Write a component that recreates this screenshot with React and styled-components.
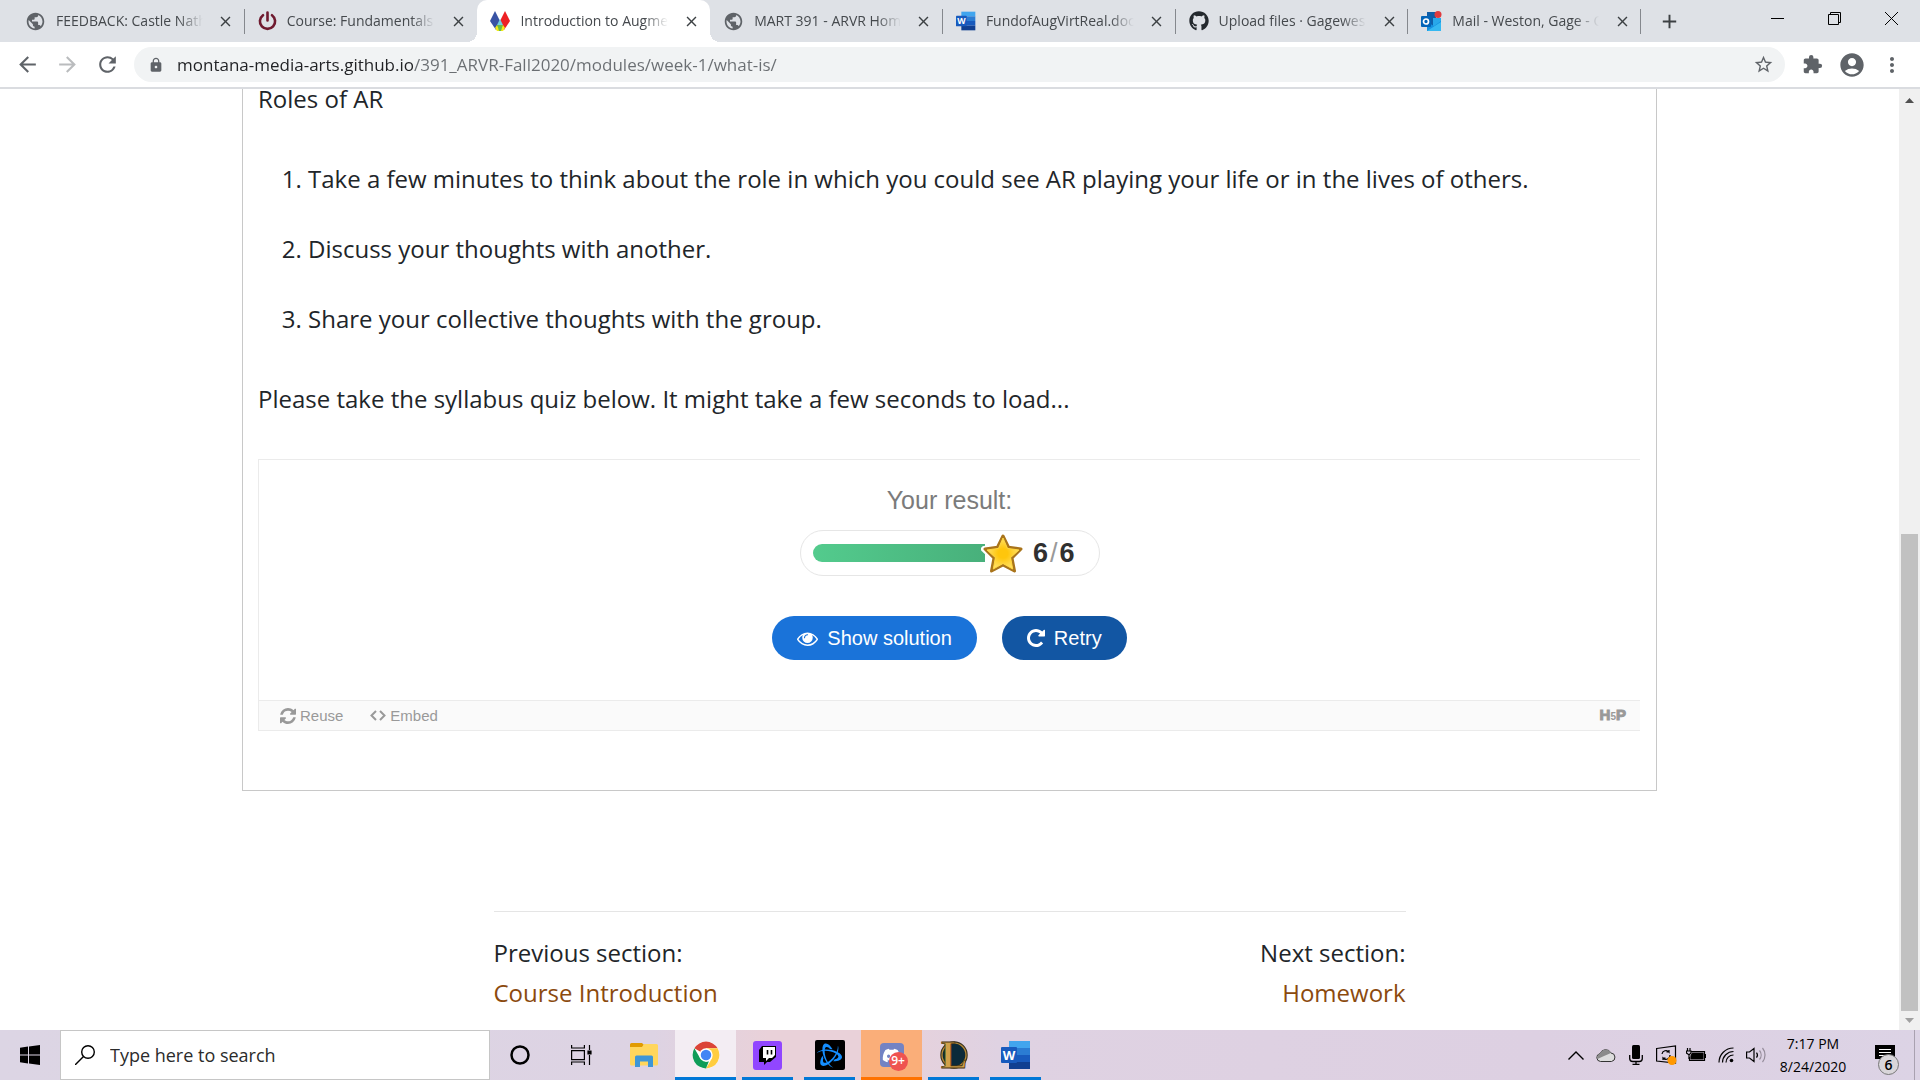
import React from "react";
import styled, { createGlobalStyle, css } from "styled-components";
import {
  MdArrowBack,
  MdArrowForward,
  MdRefresh,
  MdLock,
  MdStarBorder,
  MdExtension,
  MdAccountCircle,
  MdMoreVert,
  MdPublic,
  MdClose,
  MdAdd,
} from "react-icons/md";
import { FaGithub, FaDiscord } from "react-icons/fa";
import { SiBattledotnet } from "react-icons/si";

const uiFont = '"Segoe UI", "Open Sans", "Noto Sans", sans-serif';
const quizFont = '"Liberation Sans", Arial, sans-serif';

const GlobalStyle = createGlobalStyle`
  *, *::before, *::after { box-sizing: border-box; }
  body { margin: 0; overflow: hidden; background: #fff; font-family: ${uiFont}; color: #212529; }
  button { font: inherit; color: inherit; border: 0; background: none; padding: 0; margin: 0; display: inline-flex; align-items: center; justify-content: center; }
  svg { display: block; flex: none; }
`;

const Desktop = styled.div`
  height: 100vh;
  display: grid;
  grid-template-columns: minmax(0, 1fr);
  grid-template-rows: auto auto minmax(0, 1fr) auto;
`;

/* ---------- Tab strip ---------- */

const TabStrip = styled.header`
  height: 42px;
  padding-left: 12px;
  display: flex;
  background: #dee1e6;
`;

const TabList = styled.div`
  flex: 1;
  display: flex;
  min-width: 0;
`;

const Tab = styled.div`
  position: relative;
  flex: 1 1 0;
  min-width: 0;
  display: flex;
  align-items: center;
  padding: 0 11px 0 13px;
  color: #45494d;
  ${(p) =>
    p.$divider &&
    css`
      &::after {
        content: "";
        position: absolute;
        right: 0;
        top: 9px;
        width: 1px;
        height: 25px;
        background: #85888d;
      }
    `}
  ${(p) =>
    p.$active &&
    css`
      background: #fff;
      border-radius: 10px 10px 0 0;
      &::before,
      &::after {
        content: "";
        position: absolute;
        bottom: 0;
        width: 10px;
        height: 10px;
      }
      &::before {
        left: -10px;
        background: radial-gradient(circle at 0 0, transparent 10px, #fff 10px);
      }
      &::after {
        right: -10px;
        background: radial-gradient(circle at 100% 0, transparent 10px, #fff 10px);
      }
    `}
`;

const TabTitle = styled.button`
  flex: 1;
  min-width: 0;
  height: 34px;
  gap: 10px;
  justify-content: flex-start !important;
`;

const TabLabel = styled.span`
  flex: 1;
  min-width: 0;
  margin-right: 15px;
  overflow: hidden;
  white-space: nowrap;
  text-align: left;
  font-size: 14px;
  line-height: 20px;
  mask-image: linear-gradient(90deg, #000 calc(100% - 24px), transparent);
`;

const IconButton = styled.button`
  flex: none;
  width: ${(p) => p.$w || 20}px;
  height: ${(p) => p.$h || 20}px;
  color: ${(p) => p.$color || "#3c4043"};
`;

const StripEnd = styled.div`
  width: 279px;
  display: flex;
  align-items: flex-start;
  justify-content: space-between;
`;

const NewTab = styled.button`
  width: 56px;
  height: 34px;
  margin-top: 4px !important;
  color: #3c4043;
`;

const WindowControls = styled.div`
  display: flex;
`;

/* ---------- Toolbar ---------- */

const Toolbar = styled.nav`
  height: 47px;
  padding: 0 14px 0 13px;
  display: flex;
  align-items: center;
  border-bottom: 2px solid #dadce0;
  background: #fff;
`;

const NavButtons = styled.div`
  display: flex;
  gap: 12px;
  margin-right: 13px;
`;

const Omnibox = styled.label`
  flex: 1;
  height: 35px;
  padding: 0 12px 0 14px;
  display: flex;
  align-items: center;
  gap: 13px;
  border-radius: 18px;
  background: #f1f3f4;
  color: #5f6368;
`;

const UrlInput = styled.input`
  flex: 1;
  min-width: 0;
  height: 28px;
  padding: 0;
  border: 0;
  outline: 0;
  font-family: ${uiFont};
  font-size: 17px;
  color: transparent;
  background: linear-gradient(90deg, #202124 236px, #6a6e72 236px);
  background-clip: text;
  -webkit-background-clip: text;
`;

const ToolbarEnd = styled.div`
  display: flex;
  gap: 12px;
  margin-left: 13px;
`;

/* ---------- Page ---------- */

const Viewport = styled.div`
  display: flex;
  min-height: 0;
`;

const Page = styled.main`
  flex: 1;
  min-width: 0;
  overflow: hidden;
  font-size: 24px;
  line-height: 40px;
`;

const Article = styled.article`
  max-width: 1415px;
  margin: -10px auto 0;
  padding: 0 16px 59px 15px;
  border: 1px solid #c8c8c8;
  border-top: 0;
`;

const Paragraph = styled.p`
  margin: 0 0 40px;
`;

const Steps = styled.ol`
  margin: 0 0 40px;
  padding-left: 50px;
  display: grid;
  gap: 30px;
`;

const Quiz = styled.section`
  border: 1px solid #ebebeb;
  border-right: 0;
  font-family: ${quizFont};
`;

const QuizBody = styled.div`
  height: 240px;
  padding-top: 26px;
  display: flex;
  flex-direction: column;
  align-items: center;
`;

const ResultLabel = styled.div`
  font-size: 25px;
  line-height: 28px;
  color: #7b7b7b;
`;

const ScoreBar = styled.div`
  width: 300px;
  height: 46px;
  margin: 16px 0 40px;
  padding: 0 24px 0 12px;
  display: flex;
  align-items: center;
  border: 1px solid #e6e6e6;
  border-radius: 23px;
`;

const Progress = styled.div`
  flex: 1;
  height: 18px;
  border-radius: 9px 0 0 9px;
  background: linear-gradient(90deg, #53cb8d, #48b07b);
`;

const StarIcon = styled.svg`
  width: 44px;
  height: 42px;
  margin-left: -4px;
`;

const Score = styled.div`
  display: flex;
  gap: 2px;
  margin-left: 8px;
  font-size: 27px;
  line-height: 30px;
  font-weight: 700;
  color: #303030;
`;

const Slash = styled.span`
  color: #999;
  font-weight: 400;
`;

const QuizActions = styled.div`
  display: flex;
  gap: 25px;
`;

const QuizButton = styled.button`
  height: 44px;
  padding: 0 25px;
  gap: 9px;
  border-radius: 22px;
  font-size: 20px;
  line-height: 24px;
  color: #fff;
  background: ${(p) => (p.$dark ? "#1256a3" : "#1a73d9")};
`;

const QuizFooter = styled.footer`
  height: 30px;
  padding: 0 14px 0 21px;
  display: flex;
  align-items: center;
  gap: 27px;
  border-top: 1px solid #ebebeb;
  background: #fafafa;
  color: #999;
`;

const FooterButton = styled.button`
  gap: 4px;
  font-size: 15px;
  line-height: 20px;
`;

const H5PLogo = styled.a`
  margin-left: auto;
  display: flex;
  align-items: baseline;
  color: #999;
  text-decoration: none;
  font-size: 15px;
  line-height: 20px;
  font-weight: 700;
  -webkit-text-stroke: 1px #999;
  small {
    font-size: 10px;
    -webkit-text-stroke: 0;
  }
`;

const SectionNav = styled.nav`
  max-width: 912px;
  margin: 120px auto 0;
  padding-top: 21px;
  display: flex;
  justify-content: space-between;
  border-top: 1px solid #e5e5e5;
`;

const SectionLink = styled.div`
  display: flex;
  flex-direction: column;
  text-align: ${(p) => p.$align || "left"};
  a {
    color: #8b4a0e;
    text-decoration: none;
  }
`;

const Scrollbar = styled.div`
  width: 21px;
  padding: 0 2px;
  display: flex;
  flex-direction: column;
  align-items: center;
  background: #f0f0f0;
`;

const ScrollTrack = styled.div`
  flex: 1;
  width: 17px;
  display: flex;
  align-items: flex-end;
`;

const ScrollThumb = styled.div`
  width: 100%;
  height: 53%;
  background: #c1c1c1;
`;

/* ---------- Taskbar ---------- */

const Taskbar = styled.footer`
  height: 50px;
  display: flex;
  background: linear-gradient(90deg, #dcd5e4 0, #ddd3e3 34%, #e9d1d9 40%, #e9d1d9 45%, #dfd2e2 52%, #ddd0e2 80%, #dcd3e5 100%);
  color: #000;
`;

const TaskSearch = styled.label`
  width: 430px;
  padding: 0 14px;
  display: flex;
  align-items: center;
  gap: 15px;
  background: #fff;
  border: 1px solid #c6c6c6;
`;

const SearchInput = styled.input`
  flex: 1;
  min-width: 0;
  padding: 0;
  border: 0;
  outline: 0;
  background: none;
  font-family: ${uiFont};
  font-size: 18px;
  line-height: 24px;
  &::placeholder {
    color: #2b2b2b;
    opacity: 1;
  }
`;

const Apps = styled.div`
  display: flex;
  gap: 1px;
  margin-left: -1px;
`;

const AppButton = styled.button`
  position: relative;
  width: 61px;
  height: 50px;
  background: ${(p) => p.$bg || "transparent"};
  ${(p) =>
    p.$line &&
    css`
      &::after {
        content: "";
        position: absolute;
        left: ${p.$bg ? 0 : 5}px;
        right: ${p.$bg ? 0 : 5}px;
        bottom: 0;
        height: 3px;
        background: ${p.$line};
      }
    `}
`;

const DiscordTile = styled.span`
  position: relative;
  width: 24px;
  height: 24px;
  display: grid;
  place-items: center;
  border-radius: 4px;
  color: #fff;
  background: #7383c4;
`;

const Badge = styled.span`
  position: absolute;
  left: 9px;
  top: 9px;
  width: 19px;
  height: 19px;
  border-radius: 50%;
  background: #ef5350;
  font-size: 12px;
  line-height: 18px;
  font-weight: 600;
  text-align: center;
`;

const Tray = styled.div`
  margin-left: auto;
  display: flex;
  align-items: center;
`;

const Clock = styled.button`
  flex-direction: column;
  width: 84px;
  font-size: 14px !important;
  line-height: 23px !important;
`;

const Notifications = styled.button`
  position: relative;
  width: 60px;
  height: 50px;
  border-right: 1px solid #a9a1b0 !important;
  margin-right: 5px !important;
`;

const Count = styled.span`
  position: absolute;
  right: 15px;
  top: 24px;
  width: 21px;
  height: 21px;
  border: 1px solid #777;
  border-radius: 50%;
  background: #d9d6da;
  font-size: 14px;
  line-height: 19px;
  font-weight: 600;
  text-align: center;
`;

/* ---------- Drawings ---------- */

const PowerIcon = () => (
  <svg width="19" height="20" viewBox="0 0 19 20" fill="none" stroke="#6f1a2f" strokeWidth="2.6" strokeLinecap="round">
    <path d="M5 4.200a7.600 7.600 0 1 0 9 0M9.500 1.500v8" />
  </svg>
);

const DiamondsIcon = () => (
  <svg width="20" height="20" viewBox="0 0 20 20">
    <path d="M5 0l5 10-4 9L0 10z" fill="#3953a4" />
    <path d="M15 0l5 10-6 9-4-9z" fill="#ed2024" />
    <path d="M10 10l3 5-3 5-3-5z" fill="#6abd45" />
    <path d="M7 14l3-6 3 6z" fill="#70cddd" />
    <path d="M13 14l2 3-2 3h-3z" fill="#f6eb16" />
    <path d="M7 14l-2 3 2 3h3z" fill="#f6eb16" />
    <path d="M7.500 15h5L11 20H9z" fill="#6abd45" />
  </svg>
);

const WordIcon = ({ size }) => (
  <svg width={size} height={size} viewBox="0 0 30 30">
    <path d="M8 1h21v7H8z" fill="#41a5ee" />
    <path d="M8 8h21v7H8z" fill="#2b7cd3" />
    <path d="M8 15h21v7H8z" fill="#185abd" />
    <path d="M8 22h21v7H8z" fill="#103f91" />
    <rect x="0" y="7" width="16" height="16" rx="1" fill="#185abd" />
    <text x="8" y="20" fontSize="13" fontWeight="700" textAnchor="middle" fill="#fff" fontFamily="Open Sans, sans-serif">W</text>
  </svg>
);

const OutlookIcon = () => (
  <svg width="21" height="21" viewBox="0 0 21 21">
    <path d="M6 1h9v18H6z" fill="#0f5ea8" />
    <path d="M12 7h8v8h-8z" fill="#28a8ea" />
    <path d="M6 11l7 4 7-5v10H6z" fill="#1490df" />
    <path d="M6 20l14-9v9z" fill="#35b8f1" />
    <rect x="0" y="5" width="10" height="11" rx="1" fill="#0364b8" />
    <circle cx="5" cy="10.500" r="2.500" fill="none" stroke="#fff" strokeWidth="1.700" />
    <circle cx="17" cy="3.500" r="3.500" fill="#e03a3e" />
  </svg>
);

const EyeIcon = () => (
  <svg width="21" height="21" viewBox="0 0 1792 1792" fill="currentColor">
    <path d="M1664 960q-152-236-381-353 61 104 61 225 0 185-131.500 316.500t-316.500 131.500-316.500-131.500-131.500-316.500q0-121 61-225-229 117-381 353 133 205 333.500 326.500t434.500 121.500 434.500-121.500 333.500-326.500zm-720-384q0-20-14-34t-34-14q-125 0-214.500 89.500t-89.500 214.500q0 20 14 34t34 14 34-14 14-34q0-86 61-147t147-61q20 0 34-14t14-34zm848 384q0 34-20 69-140 230-376.500 368.500t-499.500 138.500-499.500-139-376.500-368q-20-35-20-69t20-69q140-229 376.500-368t499.500-139 499.500 139 376.500 368q20 35 20 69z" />
  </svg>
);

const RepeatIcon = () => (
  <svg width="18" height="18" viewBox="128 128 1536 1536" fill="currentColor">
    <path d="M1664 256v448q0 26-19 45t-45 19h-448q-42 0-59-40-17-39 14-69l138-138q-148-137-349-137-104 0-198.500 40.500t-163.500 109.500-109.500 163.500-40.500 198.500 40.500 198.500 109.500 163.500 163.500 109.500 198.500 40.500q119 0 225-52t179-147q7-10 23-12 15 0 25 9l137 138q9 8 9.500 20.500t-7.500 22.500q-109 132-264 204.500t-327 72.500q-156 0-298-61t-245-164-164-245-61-298 61-298 164-245 245-164 298-61q147 0 284.500 55.500t244.500 156.500l130-129q29-31 70-14 39 17 39 59z" />
  </svg>
);

const RefreshIcon = () => (
  <svg width="16" height="16" viewBox="128 128 1536 1536" fill="currentColor">
    <path d="M1639 1056q0 5-1 7-64 268-268 434.500t-478 166.500q-146 0-282.500-55t-243.500-157l-129 129q-19 19-45 19t-45-19-19-45v-448q0-26 19-45t45-19h448q26 0 45 19t19 45-19 45l-137 137q71 66 161 102t187 36q134 0 250-65t186-179q11-17 53-117 8-23 30-23h192q13 0 22.500 9.500t9.500 22.500zm25-800v448q0 26-19 45t-45 19h-448q-26 0-45-19t-19-45 19-45l138-138q-148-137-349-137-134 0-250 65t-186 179q-11 17-53 117-8 23-30 23h-199q-13 0-22.500-9.500t-9.500-22.500v-7q65-268 270-434.500t480-166.500q146 0 284 55.500t245 156.500l130-129q19-19 45-19t45 19 19 45z" />
  </svg>
);

const Star = () => (
  <StarIcon viewBox="0 0 44 42">
    <defs>
      <radialGradient id="gold">
        <stop offset="0.300" stopColor="#ffc60c" />
        <stop offset="1" stopColor="#ffe066" />
      </radialGradient>
    </defs>
    <g strokeLinejoin="round">
      <path d="M22 4l6 11.500 13 1.500-9.500 9 2.500 13-12-6-12 6 2.500-13L3 17l13-1.500z" fill="#fff" stroke="#fff" strokeWidth="6" />
      <path d="M22 4l5.500 11.200L40 17l-9 9 2.500 13L22 33l-11.500 6L13 26l-9-9 12.500-1.800z" fill="url(#gold)" stroke="#a9741b" strokeWidth="3" />
      <path d="M22 6l4.500 10.400L38 18l-8.400 7.600L31.700 37 22 31.500 12.300 37l2.100-11.400L6 18l11.500-1.600z" fill="url(#gold)" stroke="#ffd63f" strokeWidth="1" />
    </g>
  </StarIcon>
);

const ChromeIcon = () => (
  <svg width="28" height="28" viewBox="0 0 48 48">
    <circle cx="24" cy="24" r="23" fill="#fff" />
    <path d="M24 24L4.100 12.500A23 23 0 0 1 43.900 12.500H24z" fill="#db4437" />
    <path d="M24 12.500h19.900A23 23 0 0 1 24 47l10-17.200z" fill="#ffcd40" />
    <path d="M4.100 12.500l9.900 17.200L24 35.500l5-1L24 47A23 23 0 0 1 4.100 12.500z" fill="#0f9d58" />
    <circle cx="24" cy="24" r="11.500" fill="#fff" />
    <circle cx="24" cy="24" r="9" fill="#4285f4" />
  </svg>
);

const FolderIcon = () => (
  <svg width="28" height="24" viewBox="0 0 28 24">
    <path d="M0 1.500A1.500 1.500 0 0 1 1.500 0H12l2 2-2 3H0z" fill="#e19b00" />
    <path d="M0 4h12l2-3h12.500A1.500 1.500 0 0 1 28 2.500V21a1.500 1.500 0 0 1-1.500 1.500h-25A1.500 1.500 0 0 1 0 21z" fill="#ffd65c" />
    <path d="M5 24V14a1.500 1.500 0 0 1 1.500-1.500h15A1.500 1.500 0 0 1 23 14v10h-5v-5.500h-8V24z" fill="#3e96d6" />
  </svg>
);

const TwitchIcon = () => (
  <svg width="29" height="29" viewBox="0 0 29 29">
    <rect width="29" height="29" rx="3" fill="#9146ff" />
    <path d="M9 5h14v11l-6 5h-3l-3 3v-3H6V9z" fill="#000" />
    <path d="M10 6h12v8l-3 3h-3l-3 3v-3h-3z" fill="#fff" />
    <path d="M14.500 9v4.500M18.500 9v4.500" stroke="#000" strokeWidth="1.600" />
  </svg>
);

const BattleTile = styled.span`
  width: 30px;
  height: 30px;
  display: grid;
  place-items: center;
  border-radius: 2px;
  background: #000;
  color: #148eff;
`;

const LeagueIcon = () => (
  <svg width="28" height="30" viewBox="0 0 28 30">
    <circle cx="14" cy="15" r="12.500" fill="#0b2a3a" stroke="#3b3320" strokeWidth="2.500" />
    <circle cx="14" cy="15" r="12" fill="none" stroke="#b98d3a" strokeWidth="1.200" />
    <text x="14" y="28" fontSize="39" fontWeight="700" textAnchor="middle" fill="#d0a14a" stroke="#4a3510" strokeWidth="0.800" fontFamily="Liberation Serif, serif">L</text>
  </svg>
);

const favicons = {
  globe: <MdPublic size={21} color="#5f6368" />,
  power: <PowerIcon />,
  diamonds: <DiamondsIcon />,
  word: <WordIcon size={20} />,
  github: <FaGithub size={20} color="#24292e" />,
  outlook: <OutlookIcon />,
};

const tabs = [
  { icon: "globe", title: "FEEDBACK: Castle Nathan", divider: true },
  { icon: "power", title: "Course: Fundamentals of" },
  { icon: "diamonds", title: "Introduction to Augmented", active: true },
  { icon: "globe", title: "MART 391 - ARVR Home", divider: true },
  { icon: "word", title: "FundofAugVirtReal.docx", divider: true },
  { icon: "github", title: "Upload files · Gageweston", divider: true },
  { icon: "outlook", title: "Mail - Weston, Gage - Outlook", divider: true },
];

const steps = [
  "Take a few minutes to think about the role in which you could see AR playing your life or in the lives of others.",
  "Discuss your thoughts with another.",
  "Share your collective thoughts with the group.",
];

const blue = "#0078d7";

export default function App() {
  return (
    <>
      <GlobalStyle />
      <Desktop>
        <TabStrip>
          <TabList>
            {tabs.map((t) => (
              <Tab key={t.title} $active={t.active} $divider={t.divider}>
                <TabTitle>
                  {favicons[t.icon]}
                  <TabLabel>{t.title}</TabLabel>
                </TabTitle>
                <IconButton $w={16} aria-label="Close tab">
                  <MdClose size={17} />
                </IconButton>
              </Tab>
            ))}
          </TabList>
          <StripEnd>
            <NewTab aria-label="New tab">
              <MdAdd size={23} />
            </NewTab>
            <WindowControls>
              <IconButton $w={57} $h={37} $color="#000" aria-label="Minimize">
                <svg width="13" height="13" viewBox="0 0 13 13" stroke="currentColor">
                  <path d="M0 6.500h13" />
                </svg>
              </IconButton>
              <IconButton $w={57} $h={37} $color="#000" aria-label="Restore">
                <svg width="13" height="13" viewBox="0 0 13 13" fill="none" stroke="currentColor">
                  <path d="M.5 2.500h10v10H.5zM2.500 2.500v-2h10v10h-2" />
                </svg>
              </IconButton>
              <IconButton $w={57} $h={37} $color="#000" aria-label="Close window">
                <svg width="13" height="13" viewBox="0 0 13 13" stroke="currentColor">
                  <path d="M0 0l13 13M13 0L0 13" />
                </svg>
              </IconButton>
            </WindowControls>
          </StripEnd>
        </TabStrip>

        <Toolbar>
          <NavButtons>
            <IconButton $w={28} $h={28} $color="#5f6368" aria-label="Back"><MdArrowBack size={25} /></IconButton>
            <IconButton $w={28} $h={28} $color="#babcbe" aria-label="Forward"><MdArrowForward size={25} /></IconButton>
            <IconButton $w={28} $h={28} $color="#5f6368" aria-label="Reload"><MdRefresh size={25} /></IconButton>
          </NavButtons>
          <Omnibox>
            <MdLock size={16} />
            <UrlInput
              aria-label="Address"
              defaultValue="montana-media-arts.github.io/391_ARVR-Fall2020/modules/week-1/what-is/"
            />
            <IconButton $color="#5f6368" aria-label="Bookmark"><MdStarBorder size={21} /></IconButton>
          </Omnibox>
          <ToolbarEnd>
            <IconButton $w={28} $h={28} $color="#5f6368" aria-label="Extensions"><MdExtension size={21} /></IconButton>
            <IconButton $w={28} $h={28} $color="#5f6368" aria-label="Profile"><MdAccountCircle size={28} /></IconButton>
            <IconButton $w={28} $h={28} $color="#5f6368" aria-label="Menu"><MdMoreVert size={24} /></IconButton>
          </ToolbarEnd>
        </Toolbar>

        <Viewport>
          <Page>
            <Article>
              <Paragraph>Roles of AR</Paragraph>
              <Steps>
                {steps.map((s) => (
                  <li key={s}>{s}</li>
                ))}
              </Steps>
              <Paragraph>Please take the syllabus quiz below. It might take a few seconds to load...</Paragraph>
              <Quiz>
                <QuizBody>
                  <ResultLabel>Your result:</ResultLabel>
                  <ScoreBar>
                    <Progress />
                    <Star />
                    <Score>
                      <span>6</span>
                      <Slash>/</Slash>
                      <span>6</span>
                    </Score>
                  </ScoreBar>
                  <QuizActions>
                    <QuizButton><EyeIcon />Show solution</QuizButton>
                    <QuizButton $dark><RepeatIcon />Retry</QuizButton>
                  </QuizActions>
                </QuizBody>
                <QuizFooter>
                  <FooterButton><RefreshIcon />Reuse</FooterButton>
                  <FooterButton>
                    <svg width="16" height="16" viewBox="0 0 16 16" fill="none" stroke="currentColor" strokeWidth="2">
                      <path d="M6 3L1.500 7.500 6 12M10 3l4.500 4.500L10 12" />
                    </svg>
                    Embed
                  </FooterButton>
                  <H5PLogo href="#h5p">H<small>5</small>P</H5PLogo>
                </QuizFooter>
              </Quiz>
            </Article>
            <SectionNav>
              <SectionLink>
                Previous section:
                <a href="#intro">Course Introduction</a>
              </SectionLink>
              <SectionLink $align="right">
                Next section:
                <a href="#homework">Homework</a>
              </SectionLink>
            </SectionNav>
          </Page>
          <Scrollbar>
            <IconButton $w={17} $h={22} $color="#505050" aria-label="Scroll up">
              <svg width="9" height="5" viewBox="0 0 9 5" fill="currentColor"><path d="M0 5l4.500-5L9 5z" /></svg>
            </IconButton>
            <ScrollTrack>
              <ScrollThumb />
            </ScrollTrack>
            <IconButton $w={17} $h={19} $color="#a0a0a0" aria-label="Scroll down">
              <svg width="9" height="5" viewBox="0 0 9 5" fill="currentColor"><path d="M0 0l4.500 5L9 0z" /></svg>
            </IconButton>
          </Scrollbar>
        </Viewport>

        <Taskbar>
          <IconButton $w={60} $h={50} $color="#000" aria-label="Start">
            <svg width="20" height="20" viewBox="0 0 20 20" fill="currentColor">
              <path d="M0 2.700l8-1.100v7.900H0zM9 1.500L20 0v9.500H9zM0 10.500h8v7.900l-8-1.100zM9 10.500h11V20L9 18.500z" />
            </svg>
          </IconButton>
          <TaskSearch>
            <svg width="20" height="20" viewBox="0 0 20 20" fill="none" stroke="#000" strokeWidth="1.400">
              <circle cx="13" cy="7" r="6.300" />
              <path d="M8.500 11.500L0 20" />
            </svg>
            <SearchInput aria-label="Search" placeholder="Type here to search" />
          </TaskSearch>
          <Apps>
            <AppButton aria-label="Cortana">
              <svg width="20" height="20" viewBox="0 0 20 20" fill="none" stroke="#000" strokeWidth="2.500">
                <circle cx="10" cy="10" r="8.500" />
              </svg>
            </AppButton>
            <AppButton aria-label="Task view">
              <svg width="21" height="20" viewBox="0 0 21 20" fill="none" stroke="#000" strokeWidth="1.200">
                <path d="M.6 5.600h12.800v9H.6zM.6 0v3h12.800V0M.6 20v-3h12.800v3M18.500 0v5M18.500 10v10" />
                <path d="M17 6h3v3h-3z" fill="#000" />
              </svg>
            </AppButton>
            <AppButton aria-label="File Explorer"><FolderIcon /></AppButton>
            <AppButton $bg="#f3edf3" $line={blue} aria-label="Chrome"><ChromeIcon /></AppButton>
            <AppButton $line={blue} aria-label="Twitch"><TwitchIcon /></AppButton>
            <AppButton $line={blue} aria-label="Battle.net"><BattleTile><SiBattledotnet size={25} /></BattleTile></AppButton>
            <AppButton $bg="#faae79" $line="#ff7200">
              <DiscordTile>
                <FaDiscord size={19} />
                <Badge>9+</Badge>
              </DiscordTile>
            </AppButton>
            <AppButton $line={blue} aria-label="League of Legends"><LeagueIcon /></AppButton>
            <AppButton $line={blue} aria-label="Word"><WordIcon size={30} /></AppButton>
          </Apps>
          <Tray>
            <IconButton $w={30} $h={50} $color="#000" aria-label="Show hidden icons">
              <svg width="16" height="9" viewBox="0 0 16 9" fill="none" stroke="currentColor" strokeWidth="1.400"><path d="M.5 8.500L8 1l7.500 7.500" /></svg>
            </IconButton>
            <IconButton $w={30} $h={50} aria-label="OneDrive">
              <svg width="20" height="14" viewBox="0 0 20 14" stroke="#333" strokeWidth="1">
                <path d="M4.500 13.500a4 4 0 0 1-.5-7.900 6 6 0 0 1 11-.6 4.300 4.300 0 0 1 .5 8.500z" fill="#ddd" />
                <path d="M1.500 11a4 4 0 0 1 2.500-5.400 6 6 0 0 1 11-.6L8 8z" fill="#8b8b8b" stroke="none" />
              </svg>
            </IconButton>
            <IconButton $w={30} $h={50} $color="#000" aria-label="Microphone">
              <svg width="14" height="20" viewBox="0 0 14 20" fill="none" stroke="currentColor" strokeWidth="1.300">
                <rect x="3" y="0" width="8" height="14" rx="1.500" fill="#000" stroke="none" />
                <path d="M.7 10v3.500a3 3 0 0 0 3 3h6.600a3 3 0 0 0 3-3V10M7 16.500V19M3.500 19.300h7" />
              </svg>
            </IconButton>
            <IconButton $w={30} $h={50} $color="#000" aria-label="Updates">
              <svg width="21" height="20" viewBox="0 0 21 20" fill="none" stroke="currentColor" strokeWidth="1.200">
                <path d="M.6 3.500L19.500 1v17L.6 16z" />
                <path d="M6 9a4 4 0 0 1 7-2v-2M13 7h-2.500M14 10a4 4 0 0 1-7 3v2M7 13h2.500" />
                <circle cx="16" cy="15.500" r="4.500" fill="#ff9800" stroke="none" />
              </svg>
            </IconButton>
            <IconButton $w={30} $h={50} $color="#000" aria-label="Battery">
              <svg width="20" height="14" viewBox="0 0 20 14" fill="none" stroke="currentColor" strokeWidth="1.200">
                <path d="M5 3.500h13.500v9H3.500V9" />
                <path d="M6.500 5H17v6H5V8z" fill="#000" />
                <path d="M19.500 6v4M1.500 0v3M4 0v3M.5 3h4.500v2L3.500 6.500h-1L.5 5zM3 6v5" />
              </svg>
            </IconButton>
            <IconButton $w={30} $h={50} $color="#000" aria-label="Wi-Fi">
              <svg width="16" height="16" viewBox="0 0 16 16" fill="none" stroke="currentColor" strokeWidth="1.200">
                <path d="M1 15.500A14.500 14.500 0 0 1 15.500 1M4.500 15.500a11 11 0 0 1 11-11M8 15.500a7.500 7.500 0 0 1 7.500-7.500" />
                <circle cx="13.500" cy="13.500" r="1.800" fill="#000" stroke="none" />
              </svg>
            </IconButton>
            <IconButton $w={30} $h={50} $color="#000" aria-label="Volume">
              <svg width="20" height="16" viewBox="0 0 20 16" fill="none" stroke="currentColor" strokeWidth="1.200">
                <path d="M.6 5h2.900L8 1.500v13L3.500 11H.6zM10.500 5.500a4 4 0 0 1 0 5" />
                <path d="M13.500 3.500a7 7 0 0 1 0 9M16.500 1a11 11 0 0 1 0 14" stroke="#958c9a" />
              </svg>
            </IconButton>
            <Clock>
              <span>7:17 PM</span>
              <span>8/24/2020</span>
            </Clock>
            <Notifications aria-label="Notifications">
              <svg width="20" height="20" viewBox="0 0 20 20">
                <path d="M0 0h20v14H9l-4 5v-5H0z" fill="#000" />
                <path d="M4 4.500h12M4 7.500h12M4 10.500h8" stroke="#fff" strokeWidth="1.200" />
              </svg>
              <Count>6</Count>
            </Notifications>
          </Tray>
        </Taskbar>
      </Desktop>
    </>
  );
}
